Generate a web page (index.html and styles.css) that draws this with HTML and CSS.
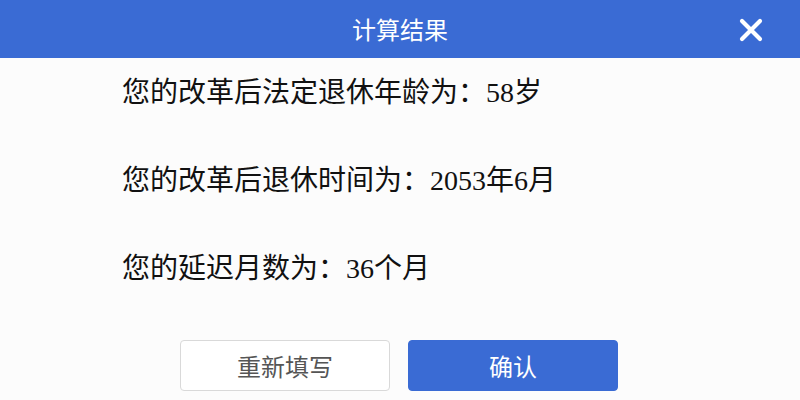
FILE: index.html
```html
<!DOCTYPE html>
<html lang="zh-CN">
<head>
<meta charset="utf-8">
<title>计算结果</title>
<link rel="stylesheet" href="styles.css">
</head>
<body>
<div class="dialog">
  <header class="dialog-header">
    <h1 class="dialog-title">计算结果</h1>
    <button class="close-btn" aria-label="关闭">
      <svg width="24" height="24" viewBox="0 0 24 24"><path d="M3 3 L21 21 M21 3 L3 21" stroke="#fff" stroke-width="4.2" stroke-linecap="round"/></svg>
    </button>
  </header>
  <main class="dialog-body">
    <p class="result-line">您的改革后法定退休年龄为：58岁</p>
    <p class="result-line">您的改革后退休时间为：2053年6月</p>
    <p class="result-line">您的延迟月数为：36个月</p>
  </main>
  <footer class="dialog-actions">
    <button class="btn btn-secondary">重新填写</button>
    <button class="btn btn-primary">确认</button>
  </footer>
</div>
</body>
</html>
```
FILE: styles.css
```css
* { box-sizing: border-box; }
html, body {
  margin: 0;
  padding: 0;
  background: #fcfcfc;
}
body {
  width: 800px;
  height: 400px;
  overflow: hidden;
  font-family: "Liberation Serif", "Noto Sans CJK SC", serif;
}
.dialog {
  display: flex;
  flex-direction: column;
  height: 400px;
}
.dialog-header {
  position: relative;
  height: 58px;
  background: #3a6bd4;
  display: flex;
  align-items: center;
  justify-content: center;
}
.dialog-title {
  margin: 0;
  color: #fff;
  font-family: "Noto Sans CJK SC", sans-serif;
  font-weight: 400;
  font-size: 24px;
  line-height: 1;
}
.close-btn {
  position: absolute;
  right: 36px;
  top: 17px;
  width: 26px;
  height: 26px;
  padding: 1px;
  border: 0;
  background: transparent;
  display: flex;
  align-items: center;
  justify-content: center;
}
.dialog-body {
  padding: 21px 0 0 122px;
  display: flex;
  flex-direction: column;
  gap: 60px;
}
.result-line {
  margin: 0;
  font-size: 28px;
  line-height: 28px;
  color: #111;
}
.dialog-actions {
  margin-top: 57px;
  display: flex;
  justify-content: center;
  gap: 18px;
  padding-right: 2px;
}
.btn {
  width: 210px;
  height: 51px;
  border-radius: 4px;
  font-family: "Noto Sans CJK SC", sans-serif;
  font-size: 24px;
  line-height: 1;
}
.btn-secondary {
  background: #fff;
  border: 1px solid #d9d9d9;
  color: #555;
}
.btn-primary {
  background: #3a6bd4;
  border: 1px solid #3a6bd4;
  color: #fff;
}
```
